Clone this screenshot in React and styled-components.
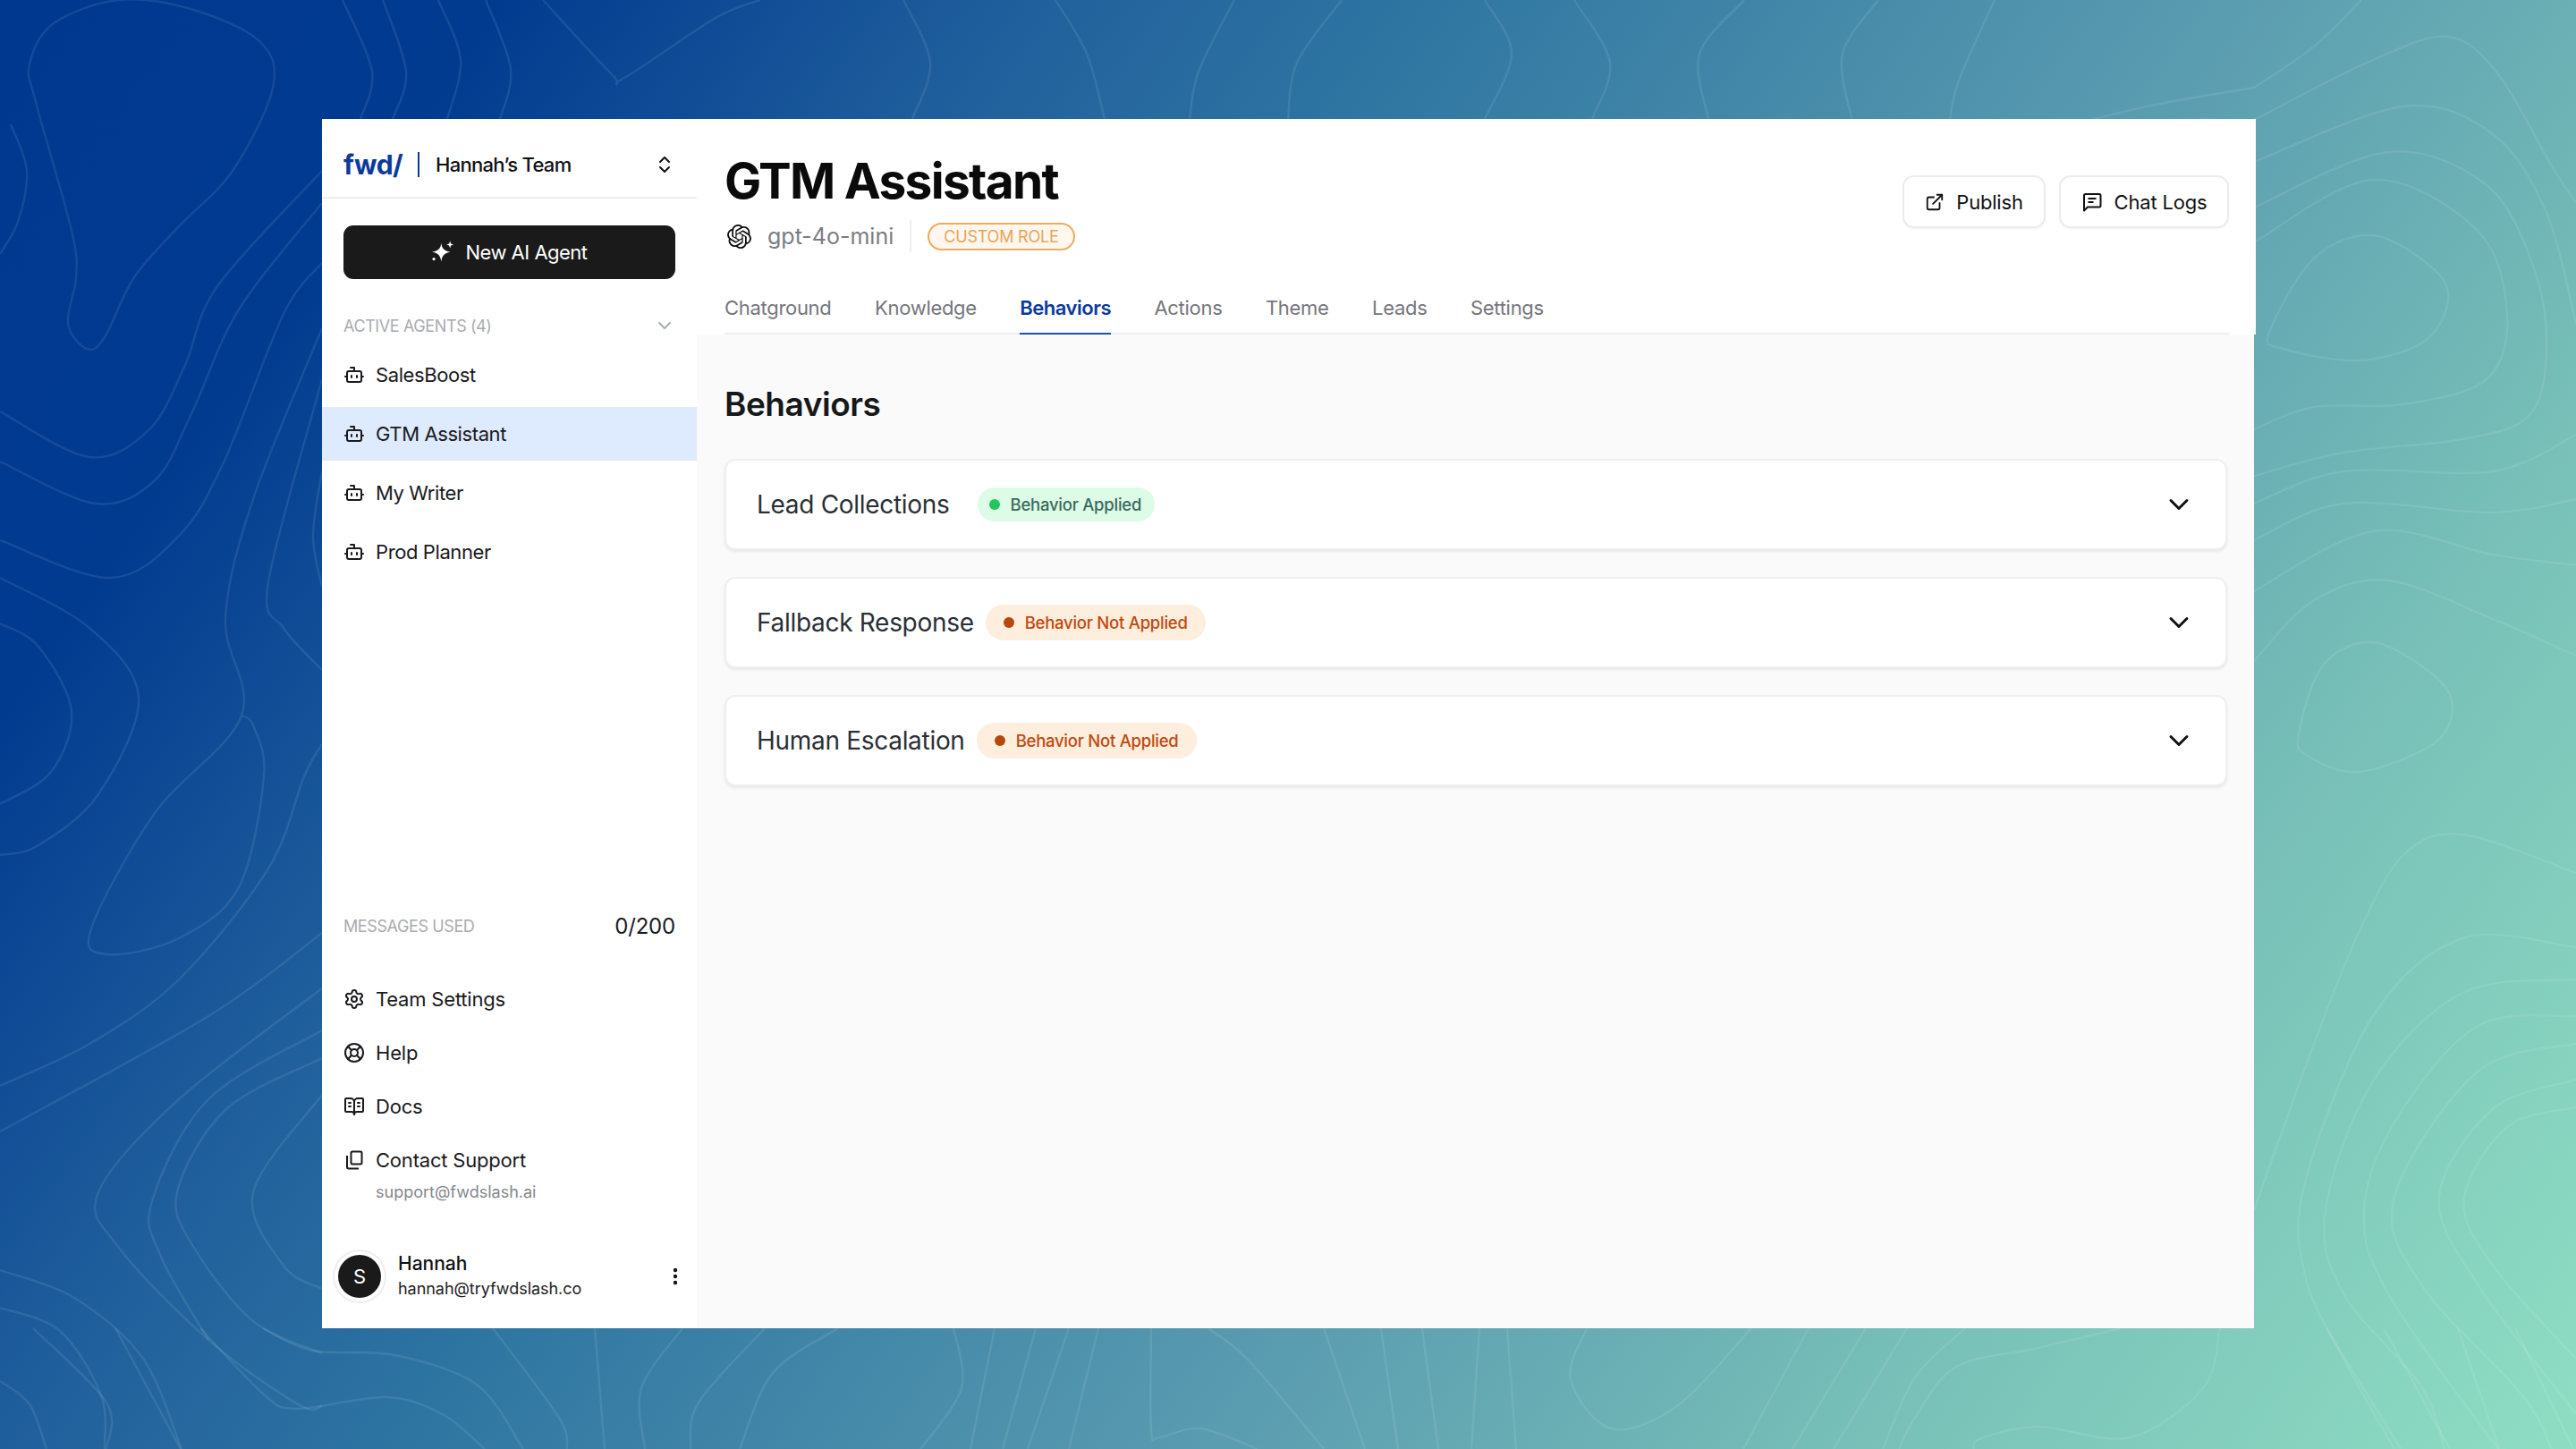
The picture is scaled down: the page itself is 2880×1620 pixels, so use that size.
import React from "react";
import styled, { createGlobalStyle } from "styled-components";
import {
  Bot,
  BookOpenText,
  ChevronDown,
  ChevronsUpDown,
  EllipsisVertical,
  ExternalLink,
  LifeBuoy,
  Settings,
} from "lucide-react";
import { SiOpenai } from "react-icons/si";

const CONTOURS = [
  // left side
  { c: 1, p: [33, 72, 40, 114, 80, 258, 85, 310, 76, 362, 97, 390, 117, 377, 150, 310, 200, 253, 260, 191, 305, 98, 290, 46, 213, 10, 133, 0, 60, 26] },
  { p: [12, 139, 30, 191, 20, 248, 0, 284] },
  { p: [0, 460, 100, 511, 167, 480, 207, 408, 243, 320, 360, 191] },
  { p: [0, 516, 107, 563, 173, 537, 213, 465, 267, 346, 360, 227] },
  { p: [0, 604, 123, 646, 200, 599, 250, 517, 317, 351, 360, 294] },
  { p: [0, 646, 100, 702, 155, 780, 110, 888, 43, 945, 0, 956] },
  { p: [0, 697, 43, 723, 80, 795, 57, 863, 0, 899] },
  { p: [360, 367, 283, 558, 252, 692, 270, 800, 173, 909, 102, 1038, 120, 1067, 200, 1049, 267, 992, 295, 868, 283, 811, 270, 800] },
  { p: [360, 424, 300, 651, 317, 702, 360, 749] },
  { p: [360, 527, 350, 599, 360, 656] },
  { p: [360, 832, 340, 868, 300, 971, 200, 1095, 100, 1167, 0, 1214] },
  { p: [360, 1043, 233, 1136, 0, 1265] },
  { p: [360, 1105, 200, 1229, 110, 1333, 133, 1395, 233, 1498, 333, 1570, 360, 1572] },
  { p: [360, 1152, 233, 1229, 170, 1343, 180, 1405, 233, 1498] },
  { p: [360, 1183, 253, 1240, 198, 1333, 217, 1395, 283, 1477, 360, 1513] },
  { p: [360, 1224, 283, 1333, 317, 1415, 360, 1441] },
  { p: [0, 1420, 83, 1451, 160, 1519, 203, 1620] },
  { p: [0, 1462, 67, 1488, 113, 1560, 117, 1620] },
  { p: [0, 1544, 33, 1570, 52, 1620] },
  // top
  { p: [383, 0, 416, 80, 403, 133] },
  { p: [428, 0, 454, 80, 439, 133] },
  { p: [490, 0, 515, 67, 500, 133] },
  { p: [543, 0, 571, 77, 559, 133] },
  { p: [607, 0, 684, 83, 698, 87, 800, 20, 850, 0] },
  { p: [1010, 0, 1040, 70, 1020, 133] },
  { p: [1180, 0, 1215, 60, 1235, 133] },
  { p: [1380, 0, 1340, 80, 1330, 133] },
  { p: [1500, 0, 1450, 70, 1440, 133] },
  { p: [1660, 0, 1690, 60, 1660, 133] },
  { p: [1760, 0, 1800, 70, 1780, 133] },
  { p: [1950, 0, 1900, 60, 1910, 133] },
  { p: [2100, 0, 2060, 60, 2070, 133] },
  { p: [2230, 0, 2190, 90, 2180, 133] },
  { p: [2520, 98, 2420, 115, 2340, 133] },
  { p: [2520, 134, 2500, 135, 2460, 133] },
  // right side
  { p: [2520, 98, 2587, 52, 2640, 0] },
  { p: [2520, 134, 2653, 67, 2737, 41, 2793, 83, 2853, 186, 2880, 227] },
  { p: [2520, 181, 2687, 119, 2787, 150, 2847, 238, 2880, 362] },
  { p: [2520, 232, 2670, 170, 2780, 207, 2833, 300, 2847, 393, 2827, 465, 2753, 491, 2620, 506, 2520, 532] },
  { p: [2520, 271, 2653, 201, 2770, 258, 2803, 351, 2780, 424, 2687, 452, 2587, 455, 2520, 480] },
  { c: 1, p: [2537, 372, 2587, 289, 2653, 263, 2720, 300, 2737, 336, 2710, 382, 2637, 403, 2553, 390] },
  { p: [2520, 563, 2620, 527, 2787, 527, 2880, 486] },
  { p: [2520, 604, 2620, 563, 2787, 573, 2880, 558] },
  { p: [2520, 661, 2653, 594, 2787, 620, 2880, 632] },
  { p: [2520, 739, 2587, 671, 2670, 649, 2787, 692, 2880, 733] },
  { c: 1, p: [2570, 821, 2597, 744, 2653, 718, 2720, 754, 2742, 790, 2720, 832, 2637, 863, 2580, 845] },
  { p: [2520, 1353, 2587, 1167, 2637, 1043, 2687, 956, 2753, 933, 2880, 976] },
  { p: [2880, 1059, 2753, 1049, 2653, 1136, 2577, 1322, 2577, 1426, 2620, 1519, 2677, 1620] },
  { p: [2880, 1095, 2753, 1110, 2653, 1209, 2600, 1353, 2620, 1446, 2707, 1550, 2733, 1620] },
  { p: [2880, 1136, 2770, 1147, 2680, 1250, 2643, 1353, 2670, 1446, 2787, 1612, 2800, 1620] },
  { p: [2880, 1167, 2770, 1198, 2677, 1338, 2707, 1436, 2820, 1560, 2853, 1620] },
  { p: [2880, 1207, 2787, 1240, 2727, 1338, 2770, 1436, 2880, 1581] },
  { p: [2880, 1238, 2803, 1260, 2755, 1341, 2787, 1415, 2880, 1519] },
  // bottom
  { p: [37, 1485, 119, 1568, 119, 1620] },
  { p: [129, 1485, 202, 1620] },
  { p: [224, 1485, 294, 1558, 331, 1575, 432, 1562, 496, 1582, 542, 1620] },
  { p: [294, 1485, 349, 1510, 441, 1515, 533, 1548, 585, 1620] },
  { p: [551, 1485, 625, 1585, 634, 1620] },
  { p: [665, 1485, 676, 1620] },
  { p: [763, 1485, 717, 1552, 721, 1620] },
  { p: [855, 1485, 781, 1568, 772, 1620] },
  { p: [937, 1485, 864, 1535, 827, 1620] },
  { p: [1066, 1485, 1075, 1552, 1029, 1620] },
  { p: [1112, 1485, 1085, 1620] },
  { p: [1158, 1485, 1121, 1620] },
  { p: [1195, 1485, 1149, 1620] },
  { p: [1228, 1485, 1195, 1620] },
  { p: [1287, 1485, 1287, 1598, 1296, 1607, 1342, 1597, 1406, 1620] },
  { p: [1351, 1485, 1397, 1522, 1480, 1620] },
  { p: [1480, 1485, 1526, 1620] },
  { p: [1544, 1485, 1563, 1620] },
  { p: [1590, 1485, 1608, 1620] },
  { p: [1654, 1485, 1645, 1620] },
  { p: [1685, 1485, 1695, 1620] },
  { p: [1774, 1485, 1756, 1542, 1801, 1597, 1875, 1572, 1958, 1485] },
  { p: [2022, 1485, 1949, 1620] },
  { p: [2086, 1485, 2004, 1620] },
  { p: [2132, 1485, 2050, 1620] },
  { p: [2197, 1485, 2141, 1540, 2105, 1620] },
  { p: [2371, 1485, 2279, 1507, 2187, 1528, 2141, 1585, 2123, 1620] },
  { p: [2482, 1485, 2463, 1552, 2381, 1607, 2279, 1595, 2215, 1608, 2206, 1620] },
  { p: [2601, 1485, 2684, 1620] },
  { p: [2665, 1485, 2739, 1620] },
  { p: [2748, 1485, 2794, 1620] },
  { p: [2812, 1485, 2877, 1620] },
];

// catmull-rom through the points, good enough for contour lines
const smooth = ({ p, c }) => {
  const pts = [];
  for (let i = 0; i < p.length; i += 2) pts.push([p[i], p[i + 1]]);
  const n = pts.length;
  const at = (i) => (c ? pts[(i + n) % n] : pts[Math.max(0, Math.min(n - 1, i))]);
  let d = `M${pts[0][0]} ${pts[0][1]}`;
  const segs = c ? n : n - 1;
  for (let i = 0; i < segs; i++) {
    const [p0, p1, p2, p3] = [at(i - 1), at(i), at(i + 1), at(i + 2)];
    const c1x = p1[0] + (p2[0] - p0[0]) / 6;
    const c1y = p1[1] + (p2[1] - p0[1]) / 6;
    const c2x = p2[0] - (p3[0] - p1[0]) / 6;
    const c2y = p2[1] - (p3[1] - p1[1]) / 6;
    d += `C${c1x.toFixed(1)} ${c1y.toFixed(1)} ${c2x.toFixed(1)} ${c2y.toFixed(1)} ${p2[0]} ${p2[1]}`;
  }
  return c ? d + "Z" : d;
};

const AGENTS = ["SalesBoost", "GTM Assistant", "My Writer", "Prod Planner"];
const TABS = ["Chatground", "Knowledge", "Behaviors", "Actions", "Theme", "Leads", "Settings"];
const BEHAVIORS = [
  { name: "Lead Collections", applied: true },
  { name: "Fallback Response", applied: false },
  { name: "Human Escalation", applied: false },
];

const Sparkle = () => (
  <svg width="26" height="26" viewBox="0 0 24 24" fill="#fff">
    <path d="M10.500 2.500c.6 5.600 2.800 8 9.500 9.200-6.700 1.300-8.900 3.900-9.500 10.300-.7-6.400-2.900-9-9.500-10.300 6.600-1.200 8.800-3.600 9.500-9.200z" />
    <path d="M19.500 0.500l.9 2.800 2.800.9-2.800.9-.9 2.800-.9-2.800-2.800-.9 2.800-.9z" />
    <circle cx="2.800" cy="19" r="1.500" />
  </svg>
);

const CopyIcon = () => (
  <svg width="24" height="24" viewBox="0 0 24 24" fill="none" stroke="currentColor" strokeWidth="2">
    <rect x="8.500" y="2.500" width="12" height="14" rx="1.500" />
    <path d="M4 7v12.500A2 2 0 0 0 6 21.500h11" />
  </svg>
);

const ChatIcon = () => (
  <svg width="24" height="24" viewBox="0 0 24 24" fill="none" stroke="currentColor" strokeWidth="2" strokeLinejoin="round">
    <path d="M21.500 16a1.500 1.500 0 0 1-1.500 1.500H7L3 21.500V4.500A1.500 1.500 0 0 1 4.500 3H20a1.500 1.500 0 0 1 1.500 1.500z" />
    <path d="M7.500 8h9M7.500 12h6" />
  </svg>
);

const App = () => {
  return (
    <Page>
      <GlobalStyle />
      <Wallpaper viewBox="0 0 2880 1620">
        {CONTOURS.map((line, i) => (
          <path key={i} d={smooth(line)} />
        ))}
      </Wallpaper>

      <Window>
        <Sidebar>
          <TeamBar>
            <Logo>fwd/</Logo>
            <LogoRule />
            <TeamName>Hannah’s Team</TeamName>
            <ChevronsUpDown size={24} strokeWidth={2} />
          </TeamBar>

          <NewAgent>
            <Sparkle />
            New AI Agent
          </NewAgent>

          <SectionHead>
            <Caps>ACTIVE AGENTS (4)</Caps>
            <ChevronDown size={24} strokeWidth={2} />
          </SectionHead>

          <AgentList>
            {AGENTS.map((a) => (
              <AgentRow key={a} $active={a === "GTM Assistant"}>
                <Bot size={24} strokeWidth={2} />
                {a}
              </AgentRow>
            ))}
          </AgentList>

          <Bottom>
            <Usage>
              <Caps>MESSAGES USED</Caps>
              <Count>0/200</Count>
            </Usage>
            <NavList>
              <NavRow>
                <Settings size={24} strokeWidth={2} />
                Team Settings
              </NavRow>
              <NavRow>
                <LifeBuoy size={24} strokeWidth={2} />
                Help
              </NavRow>
              <NavRow>
                <BookOpenText size={24} strokeWidth={2} />
                Docs
              </NavRow>
              <NavRow>
                <CopyIcon />
                Contact Support
              </NavRow>
            </NavList>
            <SupportMail>support@fwdslash.ai</SupportMail>
            <UserRow>
              <Avatar>
                <span>S</span>
              </Avatar>
              <UserText>
                <UserName>Hannah</UserName>
                <UserMail>hannah@tryfwdslash.co</UserMail>
              </UserText>
              <EllipsisVertical size={24} strokeWidth={2.4} />
            </UserRow>
          </Bottom>
        </Sidebar>

        <Main>
          <Header>
            <TopRow>
              <div>
                <Title>GTM Assistant</Title>
                <ModelRow>
                  <SiOpenai size={27} color="#0d0d0d" />
                  <ModelName>gpt-4o-mini</ModelName>
                  <ModelRule />
                  <RoleBadge>CUSTOM ROLE</RoleBadge>
                </ModelRow>
              </div>
              <Actions>
                <GhostButton $width={160}>
                  <ExternalLink size={22} strokeWidth={2} />
                  Publish
                </GhostButton>
                <GhostButton $width={190}>
                  <ChatIcon />
                  Chat Logs
                </GhostButton>
              </Actions>
            </TopRow>
            <Tabs>
              {TABS.map((t) => (
                <Tab key={t} $active={t === "Behaviors"}>
                  {t}
                </Tab>
              ))}
            </Tabs>
          </Header>

          <Content>
            <Heading>Behaviors</Heading>
            <Cards>
              {BEHAVIORS.map((b) => (
                <Card key={b.name}>
                  <CardName>{b.name}</CardName>
                  <StatusBadge $applied={b.applied}>
                    <i />
                    {b.applied ? "Behavior Applied" : "Behavior Not Applied"}
                  </StatusBadge>
                  <CardChevron>
                    <ChevronDown size={36} strokeWidth={2} />
                  </CardChevron>
                </Card>
              ))}
            </Cards>
          </Content>
        </Main>
      </Window>
    </Page>
  );
};

export default App;

const GlobalStyle = createGlobalStyle`
  html, body {
    margin: 0;
    padding: 0;
  }
  body {
    font-family: "Inter", "Noto Sans", sans-serif;
    overflow: hidden;
  }
`;

const Page = styled.div`
  position: relative;
  width: 2880px;
  height: 1620px;
  box-sizing: border-box;
  padding: 133px 360px 135px;
  background: linear-gradient(
    125deg,
    #00388f 0%,
    #013b90 14%,
    #1f5e9c 28%,
    #2f76a2 40%,
    #5a9cb0 62%,
    #78c0b8 80%,
    #8fdec3 100%
  );
`;

const Wallpaper = styled.svg`
  position: absolute;
  inset: 0;
  width: 2880px;
  height: 1620px;
  fill: none;

  path {
    stroke: rgba(255, 255, 255, 0.09);
    stroke-width: 2.4;
  }
`;

const Window = styled.div`
  position: relative;
  display: flex;
  width: 2160px;
  height: 1352px;
  background: #fafafa;
  color: #111113;
`;

const Sidebar = styled.aside`
  width: 419px;
  flex: none;
  display: flex;
  flex-direction: column;
  background: #fff;
`;

const TeamBar = styled.div`
  height: 89px;
  box-sizing: border-box;
  flex: none;
  display: flex;
  align-items: center;
  padding: 14px 24px 0;
  border-bottom: 2px solid #eeeeee;
`;

const Logo = styled.div`
  font-size: 30px;
  font-weight: 700;
  color: #0b3a9c;
  width: 66px;
  letter-spacing: -0.5px;
`;

const LogoRule = styled.div`
  width: 2px;
  height: 28px;
  background: #0b3a9c;
  margin: 0 18px 0 17px;
`;

const TeamName = styled.div`
  flex: 1;
  font-size: 22px;
  font-weight: 500;
  letter-spacing: -0.7px;
`;

const NewAgent = styled.button`
  margin: 30px 24px 0;
  height: 60px;
  flex: none;
  border: 0;
  border-radius: 11px;
  background: #1a1a1a;
  color: #fff;
  font: 400 22px "Inter", sans-serif;
  letter-spacing: -0.5px;
  display: flex;
  align-items: center;
  justify-content: center;
  gap: 12px;
`;

const SectionHead = styled.div`
  margin: 40px 24px 13px;
  height: 24px;
  display: flex;
  align-items: center;
  justify-content: space-between;
  color: #a9abb0;
`;

const Caps = styled.div`
  font-size: 18px;
  color: #a9abb0;
  letter-spacing: -0.4px;
`;

const AgentList = styled.div`
  display: flex;
  flex-direction: column;
  gap: 6px;
`;

const AgentRow = styled.div`
  height: 60px;
  display: flex;
  align-items: center;
  gap: 12px;
  padding-left: 24px;
  font-size: 22px;
  color: #1a1a1e;
  letter-spacing: -0.4px;
  background: ${(p) => (p.$active ? "#deeafe" : "transparent")};
`;

const Bottom = styled.div`
  margin-top: auto;
  padding: 0 12px 28px 12px;
  display: flex;
  flex-direction: column;
`;

const Usage = styled.div`
  display: flex;
  align-items: center;
  justify-content: space-between;
  height: 30px;
  padding: 0 12px;
  margin-bottom: 47px;
`;

const Count = styled.div`
  font-size: 24px;
  color: #1a1a1e;
  letter-spacing: -0.2px;
`;

const NavList = styled.div`
  display: flex;
  flex-direction: column;
  gap: 20px;
  padding-left: 12px;
`;

const NavRow = styled.div`
  height: 40px;
  display: flex;
  align-items: center;
  gap: 12px;
  font-size: 22px;
  color: #1a1a1e;
  letter-spacing: -0.2px;
`;

const SupportMail = styled.div`
  margin: 4px 0 0 48px;
  line-height: 24px;
  font-size: 18px;
  color: #85878e;
`;

const UserRow = styled.div`
  margin-top: 52px;
  height: 60px;
  display: flex;
  align-items: center;
  gap: 13px;
`;

const Avatar = styled.div`
  width: 60px;
  height: 60px;
  box-sizing: border-box;
  border: 2px solid #eeeeee;
  border-radius: 50%;
  flex: none;
  display: flex;
  align-items: center;
  justify-content: center;

  span {
    width: 48px;
    height: 48px;
    border-radius: 50%;
    background: #1a1a1a;
    color: #fff;
    font-size: 22px;
    display: flex;
    align-items: center;
    justify-content: center;
  }
`;

const UserText = styled.div`
  flex: 1;
`;

const UserName = styled.div`
  font-size: 21px;
  font-weight: 500;
  line-height: 28px;
`;

const UserMail = styled.div`
  font-size: 18px;
  line-height: 28px;
  letter-spacing: -0.05px;
  color: #222;
`;

const Main = styled.main`
  flex: 1;
  min-width: 0;
  display: flex;
  flex-direction: column;
`;

const Header = styled.header`
  height: 241px;
  box-sizing: border-box;
  flex: none;
  margin-right: -2px;
  padding: 34px 30px 0 31px;
  background: #fff;
  display: flex;
  flex-direction: column;
`;

const TopRow = styled.div`
  display: flex;
  justify-content: space-between;
`;

const Title = styled.h1`
  margin: 0;
  font-size: 55px;
  line-height: 70px;
  font-weight: 700;
  color: #0a0a0a;
  letter-spacing: -1.7px;
`;

const ModelRow = styled.div`
  margin-top: 9px;
  height: 36px;
  display: flex;
  align-items: center;
  padding-left: 3px;
`;

const ModelName = styled.div`
  margin-left: 18px;
  font-size: 25px;
  color: #7b7c82;
`;

const ModelRule = styled.div`
  width: 2px;
  height: 36px;
  margin: 0 18px;
  background: #eeeeee;
`;

const RoleBadge = styled.div`
  height: 31px;
  box-sizing: border-box;
  padding: 0 16px;
  border: 2px solid #eeaa5f;
  border-radius: 16px;
  background: #fff7ed;
  color: #e8a458;
  font-size: 18px;
  letter-spacing: -0.2px;
  display: flex;
  align-items: center;
`;

const Actions = styled.div`
  margin-top: 29px;
  display: flex;
  gap: 15px;
`;

const GhostButton = styled.button`
  width: ${(p) => p.$width}px;
  height: 59px;
  box-sizing: border-box;
  border: 2px solid #ececec;
  border-radius: 13px;
  background: #fff;
  box-shadow: 0 1px 2px rgba(0, 0, 0, 0.06);
  color: #111;
  font: 400 22px "Inter", sans-serif;
  letter-spacing: -0.2px;
  display: flex;
  align-items: center;
  justify-content: center;
  gap: 13px;
`;

const Tabs = styled.nav`
  margin-top: 34px;
  height: 58px;
  flex: none;
  box-sizing: border-box;
  display: flex;
  gap: 48.5px;
  border-bottom: 2px solid #eeeeee;
`;

const Tab = styled.div`
  height: 58px;
  box-sizing: border-box;
  display: flex;
  align-items: center;
  font-size: 22px;
  letter-spacing: ${(p) => (p.$active ? "-0.5px" : "-0.3px")};
  font-weight: ${(p) => (p.$active ? 600 : 400)};
  color: ${(p) => (p.$active ? "#0a3a9c" : "#75767c")};
  border-bottom: 2px solid ${(p) => (p.$active ? "#1f50a8" : "transparent")};
`;

const Content = styled.div`
  flex: 1;
  padding: 56px 30px 0 31px;
`;

const Heading = styled.h2`
  margin: 0 0 39px;
  font-size: 37px;
  line-height: 44px;
  font-weight: 600;
  color: #17181a;
  letter-spacing: -0.45px;
`;

const Cards = styled.div`
  display: flex;
  flex-direction: column;
  gap: 30px;
`;

const Card = styled.div`
  height: 102px;
  box-sizing: border-box;
  padding: 0 34px 0 34px;
  display: flex;
  align-items: center;
  background: #fff;
  border: 2px solid #efeff1;
  border-radius: 12px;
  box-shadow: 0 2px 3px rgba(20, 20, 40, 0.08);
`;

const CardName = styled.div`
  font-size: 28px;
  color: #2a2f36;
  letter-spacing: -0.3px;
`;

const StatusBadge = styled.div`
  margin-left: ${(p) => (p.$applied ? 31 : 13)}px;
  height: ${(p) => (p.$applied ? 38 : 40)}px;
  padding: 0 ${(p) => (p.$applied ? 15 : 20)}px 0 ${(p) => (p.$applied ? 13 : 20)}px;
  border-radius: 20px;
  background: ${(p) => (p.$applied ? "#dcfce7" : "#fdeedd")};
  color: ${(p) => (p.$applied ? "#3c6a5e" : "#c2490f")};
  font-size: 18.5px;
  font-weight: 500;
  letter-spacing: -0.25px;
  display: flex;
  align-items: center;
  gap: 12px;

  i {
    width: 12px;
    height: 12px;
    border-radius: 50%;
    background: ${(p) => (p.$applied ? "#22c55e" : "#b7480b")};
  }
`;

const CardChevron = styled.div`
  margin-left: auto;
  display: flex;
  color: #111;
`;
